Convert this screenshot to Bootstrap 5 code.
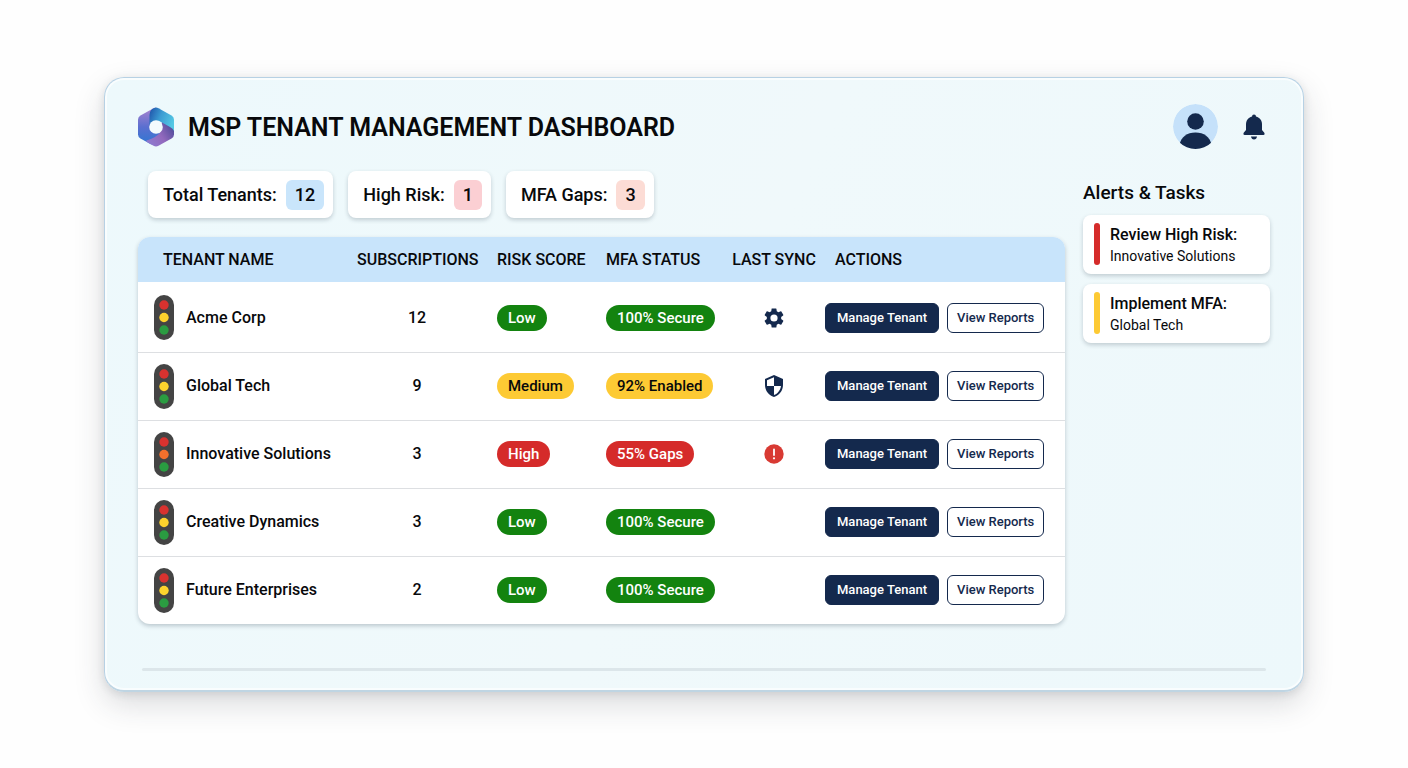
<!DOCTYPE html>
<html lang="en">
<head>
<meta charset="utf-8">
<meta name="viewport" content="width=device-width, initial-scale=1">
<title>MSP Tenant Management Dashboard</title>
<link href="https://cdn.jsdelivr.net/npm/bootstrap@5.3.0/dist/css/bootstrap.min.css" rel="stylesheet">
<style>
  :root { --navy: #14294d; }
  body { font-family: Roboto, "Liberation Sans", sans-serif; font-weight: 500; color: #08090b; background: #fefefe; }
  .page { padding: 77px 104px; }
  .panel {
    padding: 26px 33px 19px;
    border: 1px solid #b7d1e4; border-bottom: 2px solid #bfd5e3; border-radius: 20px;
    background: linear-gradient(115deg, #edf9fc, #f0f9fb 50%, #edf8fb);
    box-shadow: inset 0 0 0 2px #f9fdfe, 0 12px 30px rgba(40, 50, 60, .17), 0 2px 8px rgba(40, 50, 60, .12);
  }
  .brand { gap: 14px; }
  .top-title { font-size: 25px; line-height: 32px; padding-top: 3px; font-weight: 600; }
  .round-btn { border: 0; padding: 0; background: none; line-height: 0; }
  .columns { gap: 18px; }
  .stats { margin: 22px 0 19px 10px; gap: 15px; }
  .tile { background: #fff; border-radius: 8px; box-shadow: 0 2px 4px rgba(30, 50, 70, .22); }
  .stat { padding: 9px 9px 8px 15px; gap: 9px; font-size: 18px; line-height: 30px; font-weight: 500; }
  .stat-count { padding: 0 9px; border-radius: 6px; }
  .count-blue { background: #c9e5fb; }
  .count-red { background: #fbcfd3; }
  .count-peach { background: #fcdcd5; }
  .grid-card { border-radius: 12px; overflow: hidden; background: #fff; box-shadow: 0 2px 4px rgba(30, 50, 70, .25); }
  .tenants { table-layout: fixed; width: 100%; font-size: 16px; line-height: 20px; }
  .tenants th { height: 45px; padding: 0 10px; background: #c8e4fb; font-weight: 500; white-space: nowrap; }
  .tenants th:first-child { padding-left: 25px; }
  .tenants th.sync-head { padding: 0; }
  .tenants td { height: 68px; padding: 0 10px; }
  .tenants tbody tr + tr td { border-top: 1px solid #dddfe2; }
  .tenants tbody tr:first-child td { height: 70px; padding-top: 2px; }
  .tenants td:first-child { padding-left: 16px; padding-right: 0; }
  .tenants td:last-child { padding: 0; }
  .c-subs { width: 140px; } .c-risk { width: 109px; } .c-mfa { width: 127px; }
  .c-sync { width: 102px; } .c-act { width: 240px; }
  .pill { display: inline-block; padding: 3px 11px; border-radius: 13px; font-size: 15px; white-space: nowrap; }
  .ok { background: #13830f; color: #fff; }
  .warn { background: #fdca34; }
  .bad { background: #d52b2a; color: #fff; }
  .act { --bs-btn-font-size: 13px; --bs-btn-line-height: 20px; --bs-btn-font-weight: 500; --bs-btn-border-radius: 6px; --bs-btn-padding-y: 4px; white-space: nowrap;
    --bs-btn-border-color: var(--navy); --bs-btn-hover-bg: #21406f; --bs-btn-hover-color: #fff; }
  .act-main { --bs-btn-padding-x: 11px; --bs-btn-bg: var(--navy); --bs-btn-color: #fff; }
  .act-alt { --bs-btn-padding-x: 9px; --bs-btn-bg: #fff; --bs-btn-color: var(--navy); }
  .side { width: 187px; padding-top: 32px; }
  .side-title { font-size: 19px; line-height: 24px; margin-bottom: 10px; font-weight: 500; }
  .task { padding: 8px 10px 9px 11px; gap: 10px; margin-bottom: 10px; }
  .task-bar { width: 6px; border-radius: 3px; }
  .task-title { font-size: 16px; line-height: 24px; margin: 0; font-weight: 500; }
  .task-note { font-size: 14px; line-height: 18px; margin: 0; font-weight: 400; }
  .base-line { height: 3px; margin: 44px 4px 0; border: 0; border-radius: 2px; opacity: 1; background: #dce6ea; }
</style>
</head>
<body>
<svg width="0" height="0" class="position-absolute" aria-hidden="true">
  <symbol id="light" viewBox="0 0 20 45">
    <rect width="20" height="45" rx="10" fill="#444"/>
    <circle cx="10" cy="10" r="4.7" fill="#d8322f"/>
    <circle cx="10" cy="22.5" r="4.7" style="fill:var(--mid,#fdd32d)"/>
    <circle cx="10" cy="35" r="4.7" fill="#2a9c41"/>
  </symbol>
</svg>
<main class="page">
  <div class="panel">
    <header class="brand d-flex align-items-center">
      <svg width="36" height="40" viewBox="0 0 36 40" aria-hidden="true">
        <defs>
          <clipPath id="hex"><path d="M15.500 1.200Q18 0 20.500 1.200L33.500 8.500Q36 10 36 12.500V27.500Q36 30 33.500 31.500L20.500 38.800Q18 40 15.500 38.800L2.500 31.500Q0 30 0 27.500V12.500Q0 10 2.500 8.500Z"/></clipPath>
          <linearGradient id="ga" x1="0" y1=".2" x2="1" y2=".6"><stop offset="0" stop-color="#2159ad"/><stop offset=".45" stop-color="#3b9cd3"/><stop offset="1" stop-color="#55c8e4"/></linearGradient>
          <linearGradient id="gb" x1="0" y1="0" x2="0" y2="1"><stop offset=".1" stop-color="#9c80cf"/><stop offset=".5" stop-color="#5a6fd0"/><stop offset="1" stop-color="#2878d2"/></linearGradient>
          <linearGradient id="gc" x1="0" y1=".8" x2="1" y2=".2"><stop offset="0" stop-color="#8e7bd0"/><stop offset=".5" stop-color="#9269bd"/><stop offset="1" stop-color="#4a4a98"/></linearGradient>
        </defs>
        <g clip-path="url(#hex)">
          <path fill="url(#gb)" d="M0 0H18V20L24 30 10 40H0Z"/>
          <path fill="url(#gc)" d="M10 36Q6 34 10 33Q17 31 22 26L24 14 36 20V40H10Z"/>
          <path fill="url(#ga)" d="M11.500 19V8Q11.500 2 18 0H36V24Q35 21.500 32 20L24 15.500Q18 12 11.500 19Z"/>
        </g>
        <circle cx="18" cy="20" r="6.800" fill="#f3fafd"/>
      </svg>
      <h1 class="top-title mb-0">MSP TENANT MANAGEMENT DASHBOARD</h1>
      <div class="d-flex align-items-center gap-4 ms-auto pe-1">
        <button class="round-btn" type="button" aria-label="Account">
          <svg width="45" height="45" viewBox="0 0 45 45"><defs><clipPath id="av"><circle cx="22.500" cy="22.500" r="22.500"/></clipPath></defs>
            <g clip-path="url(#av)"><circle cx="22.500" cy="22.500" r="22.500" fill="#c5e1fa"/><g fill="#14294d"><circle cx="22.500" cy="17.500" r="8.300"/><path d="M6.500 41C8 33 14 28.600 22.500 28.600S37 33 38.500 41L34 46H11Z"/></g></g></svg>
        </button>
        <button class="round-btn" type="button" aria-label="Notifications">
          <svg width="24" height="26" viewBox="0 0 24 26" fill="#14294d"><path d="M12 .5a2 2 0 0 1 2 2C18 3.600 20 6.600 20 10.500V16L22.500 19Q23 21 21.500 21H2.500Q1 21 1.500 19L4 16V10.500C4 6.600 6 3.600 10 2.500A2 2 0 0 1 12 .5Z"/><path d="M9 22.500H15Q14.500 25.500 12 25.500T9 22.500Z"/></svg>
        </button>
      </div>
    </header>

    <div class="columns d-flex">
      <section class="flex-grow-1">
        <div class="stats d-flex">
          <div class="tile stat d-flex"><span>Total Tenants:</span><span class="stat-count count-blue">12</span></div>
          <div class="tile stat d-flex"><span>High Risk:</span><span class="stat-count count-red">1</span></div>
          <div class="tile stat d-flex"><span>MFA Gaps:</span><span class="stat-count count-peach">3</span></div>
        </div>
        <div class="grid-card">
          <table class="tenants">
            <colgroup><col><col class="c-subs"><col class="c-risk"><col class="c-mfa"><col class="c-sync"><col class="c-act"></colgroup>
            <thead><tr><th>TENANT NAME</th><th class="text-center">SUBSCRIPTIONS</th><th>RISK SCORE</th><th>MFA STATUS</th><th class="sync-head text-center">LAST SYNC</th><th>ACTIONS</th></tr></thead>
            <tbody>
              <tr>
                <td><div class="d-flex align-items-center gap-2"><svg width="20" height="45"><use href="#light"/></svg><span class="ps-1">Acme Corp</span></div></td>
                <td class="text-center">12</td><td><span class="pill ok">Low</span></td><td><span class="pill ok">100% Secure</span></td>
                <td class="text-center"><svg width="24" height="24" viewBox="0 0 24 24" fill="#14294d" role="img" aria-label="Settings"><path d="M19.140 12.940c.04-.3.060-.61.060-.94 0-.32-.02-.64-.07-.94l2.030-1.580a.49.49 0 0 0 .12-.61l-1.920-3.320a.488.488 0 0 0-.59-.22l-2.390.96c-.5-.38-1.030-.7-1.620-.94l-.36-2.540a.484.484 0 0 0-.48-.41h-3.840c-.24 0-.43.17-.47.41l-.36 2.540c-.59.24-1.130.57-1.620.94l-2.390-.96c-.22-.08-.47 0-.59.22L2.740 8.870c-.12.21-.08.47.12.61l2.030 1.580c-.05.3-.09.63-.09.94s.02.64.07.94l-2.030 1.580a.49.49 0 0 0-.12.61l1.920 3.320c.12.22.37.29.59.22l2.390-.96c.5.38 1.030.7 1.620.94l.36 2.540c.05.24.24.41.48.41h3.840c.24 0 .44-.17.47-.41l.36-2.540c.59-.24 1.130-.56 1.620-.94l2.390.96c.22.08.47 0 .59-.22l1.920-3.320c.12-.22.07-.47-.12-.61zM12 15.600A3.600 3.600 0 1 1 12 8.400a3.600 3.600 0 0 1 0 7.200z"/></svg></td>
                <td><div class="d-flex gap-2"><button type="button" class="btn act act-main">Manage Tenant</button><button type="button" class="btn act act-alt">View Reports</button></div></td>
              </tr>
              <tr>
                <td><div class="d-flex align-items-center gap-2"><svg width="20" height="45"><use href="#light"/></svg><span class="ps-1">Global Tech</span></div></td>
                <td class="text-center">9</td><td><span class="pill warn">Medium</span></td><td><span class="pill warn">92% Enabled</span></td>
                <td class="text-center"><svg width="24" height="24" viewBox="0 0 24 24" fill="#14294d" role="img" aria-label="Protected"><path d="M12 1 3 5v6c0 5.550 3.840 10.740 9 12 5.160-1.260 9-6.450 9-12V5zm0 10.990h7c-.53 4.120-3.280 7.790-7 8.940V12H5V6.300l7-3.110z"/></svg></td>
                <td><div class="d-flex gap-2"><button type="button" class="btn act act-main">Manage Tenant</button><button type="button" class="btn act act-alt">View Reports</button></div></td>
              </tr>
              <tr>
                <td><div class="d-flex align-items-center gap-2"><svg width="20" height="45" style="--mid:#f4702c"><use href="#light"/></svg><span class="ps-1">Innovative Solutions</span></div></td>
                <td class="text-center">3</td><td><span class="pill bad">High</span></td><td><span class="pill bad">55% Gaps</span></td>
                <td class="text-center"><svg width="20" height="20" viewBox="0 0 20 20" role="img" aria-label="Sync error"><circle cx="10" cy="10" r="9.700" fill="#d83a33"/><path d="M10 5.500V11" stroke="#fff" stroke-width="1.800" stroke-linecap="round"/><circle cx="10" cy="14.300" r="1.100" fill="#fff"/></svg></td>
                <td><div class="d-flex gap-2"><button type="button" class="btn act act-main">Manage Tenant</button><button type="button" class="btn act act-alt">View Reports</button></div></td>
              </tr>
              <tr>
                <td><div class="d-flex align-items-center gap-2"><svg width="20" height="45"><use href="#light"/></svg><span class="ps-1">Creative Dynamics</span></div></td>
                <td class="text-center">3</td><td><span class="pill ok">Low</span></td><td><span class="pill ok">100% Secure</span></td>
                <td></td>
                <td><div class="d-flex gap-2"><button type="button" class="btn act act-main">Manage Tenant</button><button type="button" class="btn act act-alt">View Reports</button></div></td>
              </tr>
              <tr>
                <td><div class="d-flex align-items-center gap-2"><svg width="20" height="45"><use href="#light"/></svg><span class="ps-1">Future Enterprises</span></div></td>
                <td class="text-center">2</td><td><span class="pill ok">Low</span></td><td><span class="pill ok">100% Secure</span></td>
                <td></td>
                <td><div class="d-flex gap-2"><button type="button" class="btn act act-main">Manage Tenant</button><button type="button" class="btn act act-alt">View Reports</button></div></td>
              </tr>
            </tbody>
          </table>
        </div>
      </section>

      <aside class="side flex-shrink-0">
        <h2 class="side-title">Alerts &amp; Tasks</h2>
        <div class="tile task d-flex"><span class="task-bar bad"></span><div><h3 class="task-title">Review High Risk:</h3><p class="task-note">Innovative Solutions</p></div></div>
        <div class="tile task d-flex"><span class="task-bar warn"></span><div><h3 class="task-title">Implement MFA:</h3><p class="task-note">Global Tech</p></div></div>
      </aside>
    </div>
    <hr class="base-line">
  </div>
</main>
<script src="https://cdn.jsdelivr.net/npm/bootstrap@5.3.0/dist/js/bootstrap.bundle.min.js"></script>
</body>
</html>
